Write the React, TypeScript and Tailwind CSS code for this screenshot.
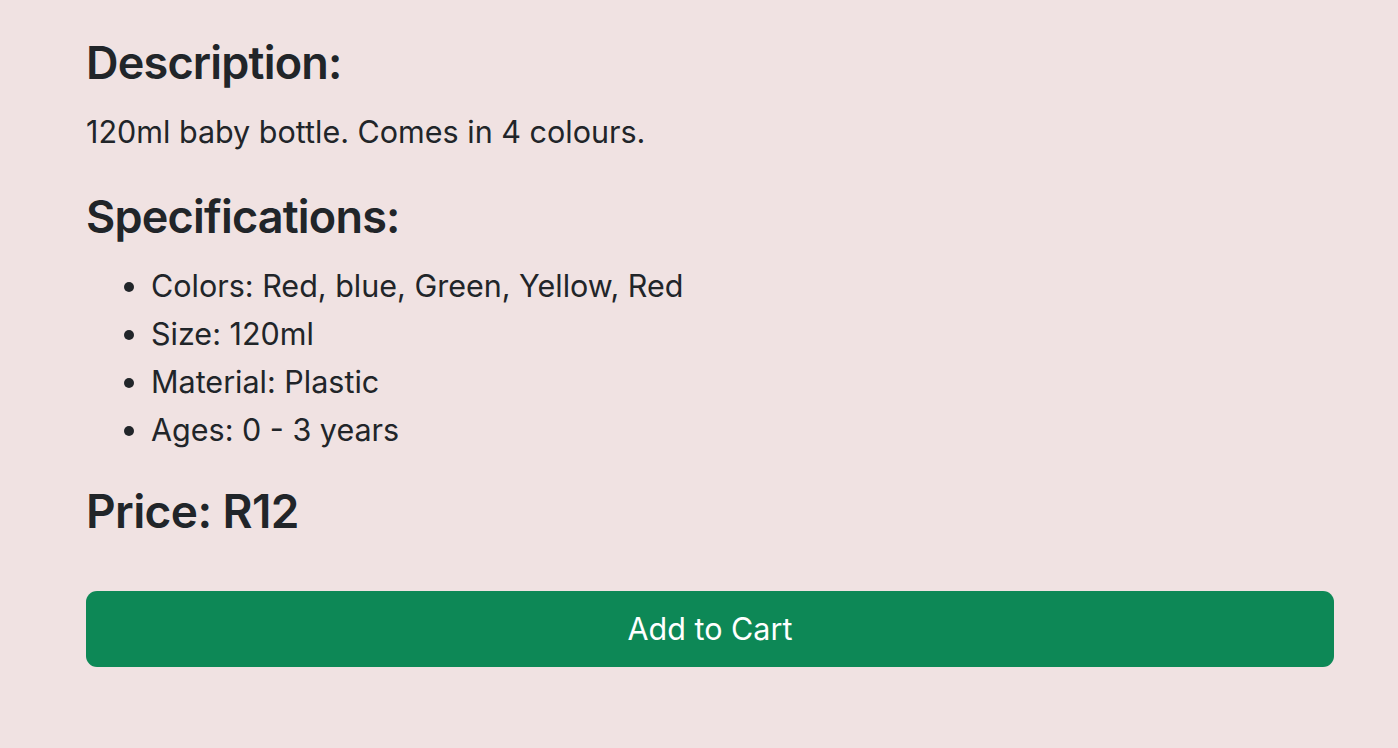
const specs = [
  'Colors: Red, blue, Green, Yellow, Red',
  'Size: 120ml',
  'Material: Plastic',
  'Ages: 0 - 3 years',
];

const App = () => {
  return (
    <div
      className="min-h-screen bg-[#f0e2e2] text-[#212529] pl-[86px] pr-[64px] pt-[35px]"
      style={{ fontFamily: 'Inter, "Noto Sans", sans-serif' }}
    >
      <h2 className="text-[45px] font-semibold tracking-[-0.8px] leading-[55px] mb-[18px]">Description:</h2>
      <p className="text-[30.5px] leading-[48px] mb-[33px]">120ml baby bottle. Comes in 4 colours.</p>

      <h2 className="text-[45px] font-semibold tracking-[-0.8px] leading-[55px] mb-[18px]">Specifications:</h2>
      <ul className="list-disc pl-[65px] text-[30.5px] leading-[48px] mb-[30px]">
        {specs.map((s) => (
          <li key={s}>{s}</li>
        ))}
      </ul>

      <h2 className="text-[46px] font-semibold tracking-[-0.6px] leading-[55px] mb-[52px]">Price: R12</h2>

      <button className="w-full h-[76px] rounded-[11px] bg-[#0d8856] text-white text-[30.5px] leading-[48px]">
        Add to Cart
      </button>
    </div>
  );
};

export default App;
